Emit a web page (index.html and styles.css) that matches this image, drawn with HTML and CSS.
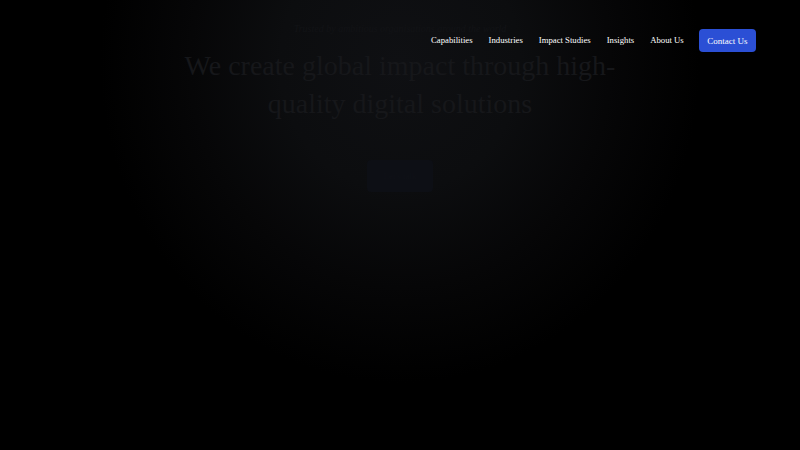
FILE: index.html
```html
<!DOCTYPE html>
<html lang="en">
<head>
<meta charset="utf-8">
<title>Global Impact</title>
<link rel="stylesheet" href="styles.css">
</head>
<body>
<div class="page">
  <header class="header">
    <nav class="nav">
      <a class="nav-link" href="#">Capabilities</a>
      <a class="nav-link" href="#">Industries</a>
      <a class="nav-link" href="#">Impact Studies</a>
      <a class="nav-link" href="#">Insights</a>
      <a class="nav-link" href="#">About Us</a>
      <a class="nav-cta" href="#">Contact Us</a>
    </nav>
  </header>
  <main class="hero">
    <p class="tagline">Trusted by ambitious organisations around the world</p>
    <h1 class="title">We create global impact through high-quality digital solutions</h1>
    <a class="hero-btn" href="#">Let's talk</a>
  </main>
</div>
</body>
</html>
```
FILE: styles.css
```css
html, body {
  margin: 0;
  padding: 0;
  height: 100%;
  background: #000;
}
body {
  font-family: "Liberation Serif", "Times New Roman", serif;
  color: #fff;
}
.page {
  position: relative;
  min-height: 450px;
  background: radial-gradient(ellipse 300px 320px at 50% 14%, #0f1013 0%, #0c0d0f 40%, #060607 70%, #000 100%);
}
.header {
  position: absolute;
  top: 29px;
  right: 44px;
}
.nav {
  display: flex;
  align-items: center;
  gap: 16px;
}
.nav-link {
  color: #fff;
  text-decoration: none;
  font-size: 8.7px;
  line-height: 11px;
}
.nav-cta {
  display: flex;
  align-items: center;
  justify-content: center;
  height: 23px;
  padding: 0 8.5px;
  margin-left: -1px;
  border-radius: 4px;
  background: #2b4fd5;
  color: #fff;
  text-decoration: none;
  font-size: 9px;
}
.hero {
  display: flex;
  flex-direction: column;
  align-items: center;
  padding-top: 22px;
}
.tagline {
  margin: 0;
  font-size: 10px;
  line-height: 14px;
  font-style: italic;
  color: #121316;
}
.title {
  margin: 11px 0 0;
  max-width: 460px;
  text-align: center;
  font-weight: normal;
  font-size: 28px;
  line-height: 38px;
  color: #16171a;
}
.hero-btn {
  margin-top: 37px;
  width: 66px;
  height: 32px;
  border-radius: 4px;
  background: #0d0f15;
  color: #0f1117;
  font-size: 9px;
  display: flex;
  align-items: center;
  justify-content: center;
  text-decoration: none;
}
```
